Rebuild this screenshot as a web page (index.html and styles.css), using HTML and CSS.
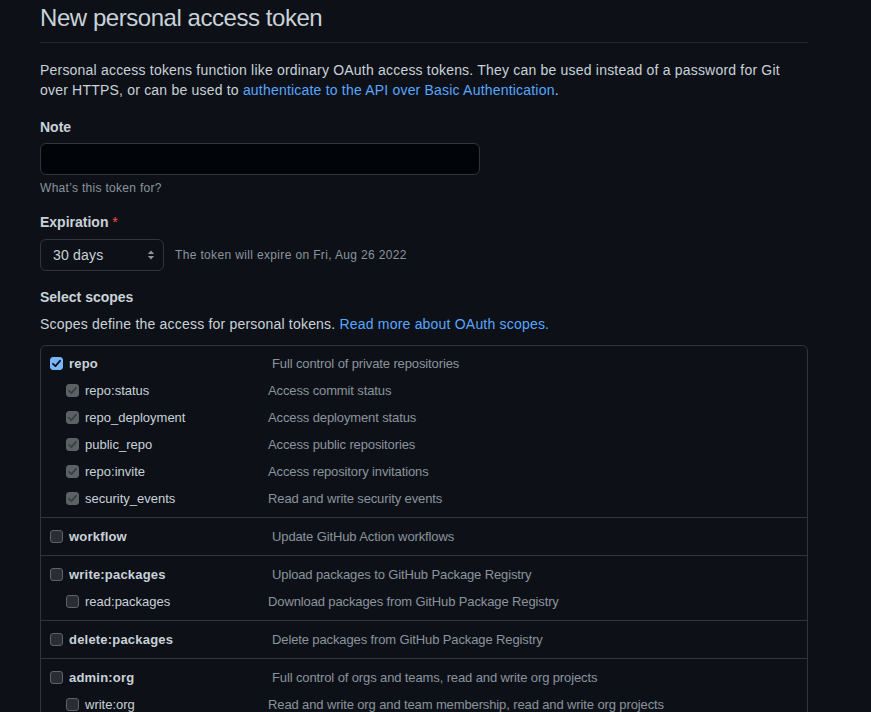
FILE: index.html
```html
<!DOCTYPE html>
<html lang="en">
<head>
<meta charset="utf-8">
<title>New personal access token</title>
<link rel="stylesheet" href="styles.css">
</head>
<body>
<main class="page">
  <h1 class="subhead">New personal access token</h1>
  <p class="intro">Personal access tokens function like ordinary OAuth access tokens. They can be used instead of a password for Git over HTTPS, or can be used to <a href="#">authenticate to the API over Basic Authentication</a>.</p>

  <div class="field note-field">
    <label class="field-label">Note</label>
    <div class="text-input"></div>
    <p class="hint">What’s this token for?</p>
  </div>

  <div class="field exp-field">
    <label class="field-label">Expiration <span class="req">*</span></label>
    <div class="exp-row">
      <div class="select">
        <span>30 days</span>
        <svg class="select-arrows" width="8" height="12" viewBox="0 0 8 12"><path d="M4 1.5 L7.2 5 H0.8 Z M4 10.5 L7.2 7 H0.8 Z" fill="#8b949e"/></svg>
      </div>
      <span class="exp-note">The token will expire on Fri, Aug 26 2022</span>
    </div>
  </div>

  <div class="field scopes-field">
    <label class="field-label">Select scopes</label>
    <p class="scopes-desc">Scopes define the access for personal tokens. <a href="#">Read more about OAuth scopes.</a></p>
  </div>

  <div class="scopes">
    <div class="group">
      <div class="row top">
        <span class="name"><span class="cb cb-on"><svg width="13" height="13" viewBox="0 0 13 13"><path d="M3 6.8 L5.4 9.2 L10 3.8" fill="none" stroke="#0d1117" stroke-width="1.8" stroke-linecap="round" stroke-linejoin="round"/></svg></span><b>repo</b></span>
        <span class="desc">Full control of private repositories</span>
      </div>
      <div class="row sub">
        <span class="name"><span class="cb cb-dis"><svg width="13" height="13" viewBox="0 0 13 13"><path d="M3 6.8 L5.4 9.2 L10 3.8" fill="none" stroke="#3b3f44" stroke-width="1.8" stroke-linecap="round" stroke-linejoin="round"/></svg></span>repo:status</span>
        <span class="desc">Access commit status</span>
      </div>
      <div class="row sub">
        <span class="name"><span class="cb cb-dis"><svg width="13" height="13" viewBox="0 0 13 13"><path d="M3 6.8 L5.4 9.2 L10 3.8" fill="none" stroke="#3b3f44" stroke-width="1.8" stroke-linecap="round" stroke-linejoin="round"/></svg></span>repo_deployment</span>
        <span class="desc">Access deployment status</span>
      </div>
      <div class="row sub">
        <span class="name"><span class="cb cb-dis"><svg width="13" height="13" viewBox="0 0 13 13"><path d="M3 6.8 L5.4 9.2 L10 3.8" fill="none" stroke="#3b3f44" stroke-width="1.8" stroke-linecap="round" stroke-linejoin="round"/></svg></span>public_repo</span>
        <span class="desc">Access public repositories</span>
      </div>
      <div class="row sub">
        <span class="name"><span class="cb cb-dis"><svg width="13" height="13" viewBox="0 0 13 13"><path d="M3 6.8 L5.4 9.2 L10 3.8" fill="none" stroke="#3b3f44" stroke-width="1.8" stroke-linecap="round" stroke-linejoin="round"/></svg></span>repo:invite</span>
        <span class="desc">Access repository invitations</span>
      </div>
      <div class="row sub">
        <span class="name"><span class="cb cb-dis"><svg width="13" height="13" viewBox="0 0 13 13"><path d="M3 6.8 L5.4 9.2 L10 3.8" fill="none" stroke="#3b3f44" stroke-width="1.8" stroke-linecap="round" stroke-linejoin="round"/></svg></span>security_events</span>
        <span class="desc">Read and write security events</span>
      </div>
    </div>

    <div class="group">
      <div class="row top">
        <span class="name"><span class="cb"></span><b>workflow</b></span>
        <span class="desc">Update GitHub Action workflows</span>
      </div>
    </div>

    <div class="group">
      <div class="row top">
        <span class="name"><span class="cb"></span><b>write:packages</b></span>
        <span class="desc">Upload packages to GitHub Package Registry</span>
      </div>
      <div class="row sub">
        <span class="name"><span class="cb"></span>read:packages</span>
        <span class="desc">Download packages from GitHub Package Registry</span>
      </div>
    </div>

    <div class="group">
      <div class="row top">
        <span class="name"><span class="cb"></span><b>delete:packages</b></span>
        <span class="desc">Delete packages from GitHub Package Registry</span>
      </div>
    </div>

    <div class="group">
      <div class="row top">
        <span class="name"><span class="cb"></span><b>admin:org</b></span>
        <span class="desc">Full control of orgs and teams, read and write org projects</span>
      </div>
      <div class="row sub">
        <span class="name"><span class="cb"></span>write:org</span>
        <span class="desc">Read and write org and team membership, read and write org projects</span>
      </div>
      <div class="row sub">
        <span class="name"><span class="cb"></span>read:org</span>
        <span class="desc">Read org and team membership, read org projects</span>
      </div>
    </div>
  </div>
</main>
</body>
</html>
```

FILE: styles.css
```css
html, body {
  margin: 0;
  padding: 0;
  background: #0d1117;
}

body {
  color: #c9d1d9;
  font-family: "Liberation Sans", Arial, sans-serif;
  font-size: 14px;
  line-height: 20px;
  overflow: hidden;
  height: 712px;
}

a {
  color: #58a6ff;
  text-decoration: none;
}

.page {
  width: 768px;
  padding-left: 40px;
}

.subhead {
  margin: 0;
  font-size: 24px;
  font-weight: 400;
  line-height: 36px;
  letter-spacing: -0.45px;
  padding-bottom: 6px;
  border-bottom: 1px solid #21262d;
}

.intro {
  margin: 17px 0 0;
  letter-spacing: 0.2px;
}

.field-label {
  display: block;
  font-weight: bold;
}

.note-field {
  margin-top: 17px;
}

.text-input {
  margin-top: 6px;
  width: 438px;
  height: 30px;
  background: #010409;
  border: 1px solid #30363d;
  border-radius: 6px;
}

.hint {
  margin: 4px 0 0;
  font-size: 12px;
  line-height: 18px;
  letter-spacing: 0.3px;
  color: #8b949e;
}

.exp-field {
  margin-top: 15px;
}

.req {
  color: #f85149;
  font-weight: 400;
}

.exp-row {
  margin-top: 7px;
  display: flex;
  align-items: center;
  gap: 11px;
}

.select {
  box-sizing: border-box;
  width: 124px;
  height: 32px;
  border: 1px solid #30363d;
  border-radius: 6px;
  background: #0d1117;
  display: flex;
  align-items: center;
  justify-content: space-between;
  padding: 0 8px 0 12px;
  color: #c9d1d9;
  letter-spacing: 0.2px;
}

.select-arrows {
  display: block;
}

.exp-note {
  font-size: 12px;
  letter-spacing: 0.35px;
  color: #8b949e;
}

.scopes-field {
  margin-top: 16px;
}

.scopes-desc {
  margin: 7px 0 0;
  letter-spacing: 0.2px;
}

.scopes {
  margin-top: 11px;
  border: 1px solid #30363d;
  border-radius: 6px;
}

.group {
  padding: 5px 0;
  border-top: 1px solid #30363d;
}

.group:first-child {
  border-top: none;
  padding-top: 4px;
}

.row {
  display: flex;
  align-items: center;
  height: 27px;
  font-size: 13px;
}

.row.top {
  padding-left: 9px;
}

.row.top .name {
  width: 222px;
}

.row.sub {
  padding-left: 25px;
}

.row.sub .name {
  width: 202px;
}

.name {
  display: flex;
  align-items: center;
  gap: 6px;
  color: #c9d1d9;
  flex: none;
}

.name b {
  font-weight: bold;
  letter-spacing: 0.2px;
}

.desc {
  color: #8b949e;
  letter-spacing: -0.12px;
}

.cb {
  box-sizing: border-box;
  width: 13px;
  height: 13px;
  border-radius: 3px;
  border: 1px solid #5d636a;
  background: #2a2e33;
  flex: none;
  display: block;
}

.cb svg {
  display: block;
  margin: -1px;
}

.cb-on {
  background: #79b8ff;
  border-color: #79b8ff;
}

.cb-dis {
  background: #5c6166;
  border-color: #5c6166;
}
```
